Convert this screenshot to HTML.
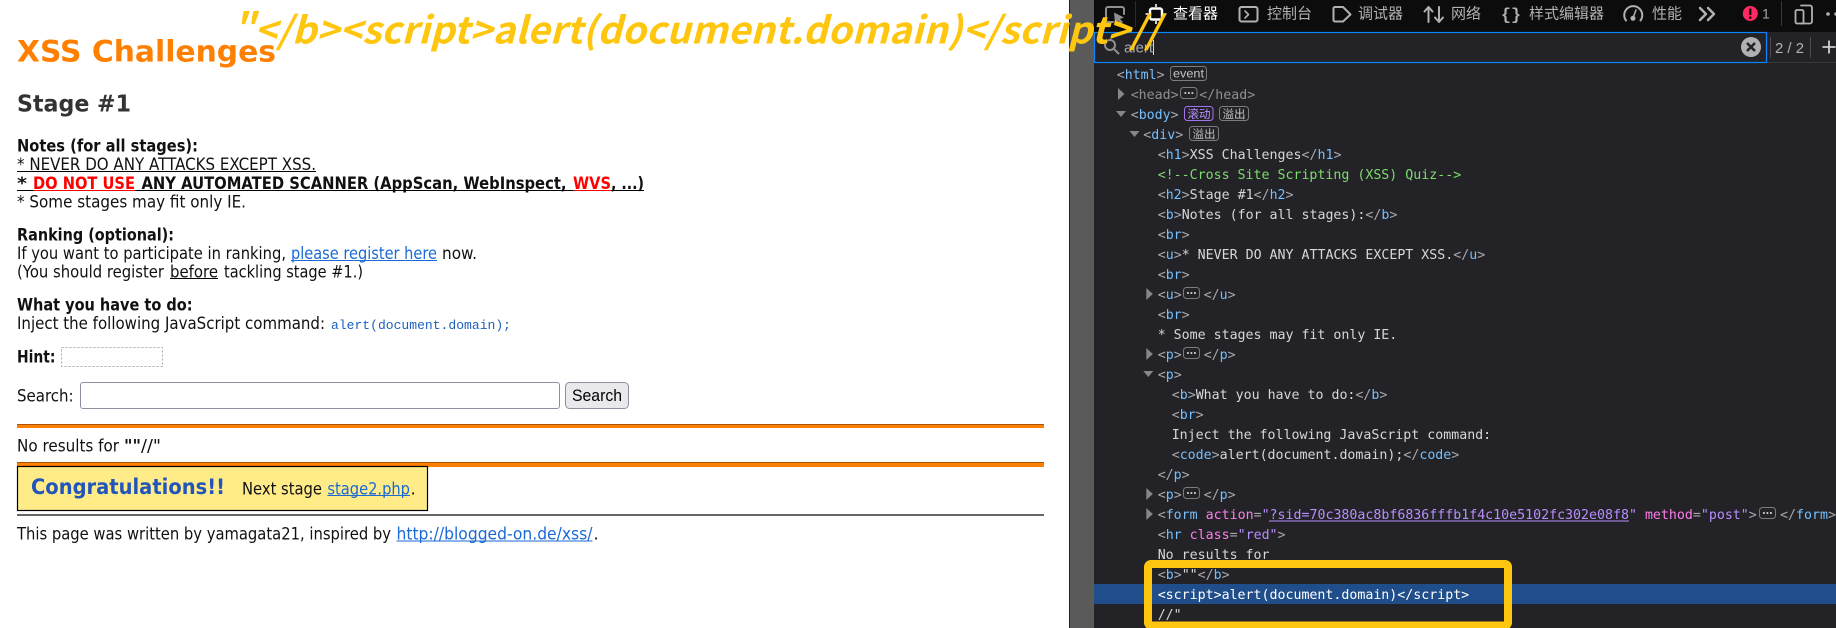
<!DOCTYPE html>
<html lang="zh"><head><meta charset="utf-8"><title>XSS Challenges</title>
<style>
html,body{margin:0;padding:0;background:#fff;width:1836px;height:628px;overflow:hidden}
svg{display:block;position:absolute;left:0;top:0}
text{white-space:pre}
.p{font-family:"DejaVu Sans","Liberation Sans",sans-serif;font-size:16.4px;fill:#111}
.h{font-weight:bold}
.m{font-family:"DejaVu Sans Mono","Liberation Mono",monospace;font-size:13.28px;fill:#d7d7db}
.c{fill:#a8a8ad}.n{fill:#75bfff}.g{fill:#8f8f93}.a{fill:#ff7de9}.v{fill:#b98eff}.k{fill:#7ddb6e}.w{fill:#fff}
.z{font-family:"Liberation Sans","Noto Sans CJK SC",sans-serif;font-size:15px;fill:#b1b1b3}
.bd{font-family:"Liberation Sans","Noto Sans CJK SC",sans-serif;font-size:12px;fill:#c4c4c6}
.box{fill:none;stroke:#7c7c80;stroke-width:1}
.ic{fill:none;stroke:#b1b1b3;stroke-width:2;stroke-linecap:round;stroke-linejoin:round}
.ar{fill:#87878a}
</style></head><body>
<svg width="1836" height="628" viewBox="0 0 1836 628" xmlns="http://www.w3.org/2000/svg">
<rect width="1069" height="628" fill="#fff"/>
<text class="p h" x="17" y="61.500" style="font-size:29px;fill:#ff7f00" textLength="259" lengthAdjust="spacingAndGlyphs">XSS Challenges</text>
<text class="p h" x="17" y="111.500" style="font-size:23px;fill:#333" textLength="114" lengthAdjust="spacingAndGlyphs">Stage #1</text>
<text class="p h" x="17" y="151.500" textLength="181" lengthAdjust="spacingAndGlyphs">Notes (for all stages):</text>
<text class="p" x="17" y="170" textLength="299" lengthAdjust="spacingAndGlyphs">* NEVER DO ANY ATTACKS EXCEPT XSS.</text>
<rect x="17" y="171" width="299" height="1" fill="#000"/>
<text class="p h" x="17" y="189" textLength="10" lengthAdjust="spacingAndGlyphs">*</text>
<text class="p h" x="33" y="189" style="fill:#f00" textLength="102" lengthAdjust="spacingAndGlyphs">DO NOT USE</text>
<text class="p h" x="141.500" y="189" textLength="425" lengthAdjust="spacingAndGlyphs">ANY AUTOMATED SCANNER (AppScan, WebInspect,</text>
<text class="p h" x="573" y="189" style="fill:#f00" textLength="38" lengthAdjust="spacingAndGlyphs">WVS</text>
<text class="p h" x="611" y="189" textLength="33" lengthAdjust="spacingAndGlyphs">, ...)</text>
<rect x="17" y="190" width="627" height="1" fill="#000"/>
<rect x="33" y="190" width="102" height="1" fill="#f00"/>
<rect x="573" y="190" width="38" height="1" fill="#f00"/>
<text class="p" x="17" y="207.500" textLength="229" lengthAdjust="spacingAndGlyphs">* Some stages may fit only IE.</text>
<text class="p h" x="17" y="240.500" textLength="157" lengthAdjust="spacingAndGlyphs">Ranking (optional):</text>
<text class="p" x="17" y="259" textLength="269" lengthAdjust="spacingAndGlyphs">If you want to participate in ranking,</text>
<text class="p" x="291" y="259" style="fill:#1a6ad6" textLength="146" lengthAdjust="spacingAndGlyphs">please register here</text>
<rect x="291" y="260" width="146" height="1" fill="#1a6ad6"/>
<text class="p" x="442" y="259" textLength="35" lengthAdjust="spacingAndGlyphs">now.</text>
<text class="p" x="17" y="277.500" textLength="147" lengthAdjust="spacingAndGlyphs">(You should register</text>
<text class="p" x="170" y="277.500" textLength="48" lengthAdjust="spacingAndGlyphs">before</text>
<rect x="170" y="278" width="48" height="1" fill="#000"/>
<text class="p" x="224" y="277.500" textLength="139" lengthAdjust="spacingAndGlyphs">tackling stage #1.)</text>
<text class="p h" x="17" y="310.500" textLength="175.500" lengthAdjust="spacingAndGlyphs">What you have to do:</text>
<text class="p" x="17" y="329" textLength="308" lengthAdjust="spacingAndGlyphs">Inject the following JavaScript command:</text>
<text x="331" y="329" style="font-family:'Liberation Mono',monospace;font-size:13px;fill:#1f5fc0" textLength="180" lengthAdjust="spacingAndGlyphs">alert(document.domain);</text>
<text class="p h" x="17" y="362.500" textLength="38.500" lengthAdjust="spacingAndGlyphs">Hint:</text>
<rect x="61.500" y="347.500" width="101" height="19" fill="none" stroke="#aaa" stroke-width="1" stroke-dasharray="2 2"/>
<text class="p" x="17" y="401.500" textLength="56.600" lengthAdjust="spacingAndGlyphs">Search:</text>
<rect x="80.500" y="382.500" width="479" height="26" rx="2.500" fill="#fff" stroke="#8f8f9d"/>
<rect x="565.500" y="382.500" width="63" height="26" rx="4" fill="#e9e9ed" stroke="#8f8f9d"/>
<text x="572" y="401" style="font-family:'Liberation Sans',sans-serif;font-size:17px;fill:#000" textLength="50" lengthAdjust="spacingAndGlyphs">Search</text>
<rect x="17" y="424" width="1027" height="4" fill="#ff7f00"/><rect x="17" y="424" width="1027" height="1" fill="#a85400"/>
<text class="p" x="17" y="451.500" textLength="102" lengthAdjust="spacingAndGlyphs">No results for</text>
<text class="p h" x="124" y="451.500" textLength="17" lengthAdjust="spacingAndGlyphs">""</text>
<text class="p" x="141" y="451.500" textLength="20" lengthAdjust="spacingAndGlyphs">//"</text>
<rect x="17" y="462" width="1027" height="5" fill="#ff7f00"/><rect x="17" y="462" width="1027" height="1" fill="#a85400"/>
<rect x="17.500" y="466.500" width="410" height="44" fill="#ffeb88" stroke="#000" stroke-width="1.200"/>
<text class="p h" x="31" y="494" style="font-size:21px;fill:#2255bb" textLength="194" lengthAdjust="spacingAndGlyphs">Congratulations!!</text>
<text class="p" x="242" y="494.500" textLength="80" lengthAdjust="spacingAndGlyphs">Next stage</text>
<text class="p" x="327.400" y="494.500" style="fill:#1a6ad6" textLength="82.600" lengthAdjust="spacingAndGlyphs">stage2.php</text>
<rect x="327.400" y="495" width="82.600" height="1" fill="#1a6ad6"/>
<text class="p" x="410.500" y="494.500">.</text>
<rect x="17" y="514" width="1027" height="2" fill="#666"/>
<text class="p" x="17" y="539.500" textLength="374" lengthAdjust="spacingAndGlyphs">This page was written by yamagata21, inspired by</text>
<text class="p" x="396.500" y="539.500" style="fill:#1a6ad6" textLength="196" lengthAdjust="spacingAndGlyphs">http://blogged-on.de/xss/</text>
<rect x="396.500" y="540.500" width="196" height="1" fill="#1a6ad6"/>
<text class="p" x="593.500" y="539.500">.</text>

<rect x="1069" width="767" height="628" fill="#232327"/>
<rect x="1069" width="1" height="628" fill="#222"/>
<rect x="1070" width="24" height="628" fill="#5a5a5a"/>
<rect x="1094" width="742" height="32" fill="#0c0c0d"/>
<rect x="1094" y="62" width="742" height="1" fill="#38383d"/>
<rect x="1094.500" y="32.500" width="672" height="30" fill="#232327" stroke="#0a84ff" stroke-width="1.200"/>

<path class="ic" style="stroke:#8f8f92" d="M1113 22H1108a2 2 0 0 1-2-2V9a2 2 0 0 1 2-2h14a2 2 0 0 1 2 2v5"/>
<path d="M1114 12.500l10 5-4 1.500 3 3-2 1.500-3-3-3 3z" fill="#8f8f92"/>
<rect x="1135" y="1" width="1" height="26" fill="#2c2c30"/>
<rect x="1150" y="8.500" width="12" height="11" rx="2" fill="#0c0c0d" stroke="#fff" stroke-width="2.400"/>
<path d="M1156 4v3M1156 21v3M1145.500 14h3M1163.500 14h3" stroke="#fff" stroke-width="1.600"/>
<text class="z" x="1173" y="18.700" style="fill:#fff">查看器</text>
<rect x="1239.500" y="7" width="18" height="14.500" rx="2" class="ic"/><path class="ic" style="stroke-width:1.600" d="M1245 11l3.500 3.500-3.500 3.500"/>
<text class="z" x="1267" y="18.700">控制台</text>
<path class="ic" d="M1335 7h8l7.500 7.500-7.500 7h-8a1.500 1.500 0 0 1-1.500-1.500v-11.500a1.500 1.500 0 0 1 1.500-1.500z"/>
<text class="z" x="1358" y="18.700">调试器</text>
<path class="ic" d="M1428.500 22V7M1424.500 11.500l4-4.500 4 4.500M1439 7v15M1435 17.500l4 4.500 4-4.500"/>
<text class="z" x="1451" y="18.700">网络</text>
<text x="1501" y="19.500" style="font-family:'Liberation Mono',monospace;font-weight:bold;font-size:17px;fill:#b1b1b3" textLength="20" lengthAdjust="spacingAndGlyphs">{}</text>
<text class="z" x="1529" y="18.700">样式编辑器</text>
<path class="ic" d="M1626 20.500a9 9 0 1 1 14.500 0"/><circle cx="1633" cy="18.300" r="2.500" fill="#b1b1b3"/><path class="ic" style="stroke-width:1.500" d="M1633 18l3-8"/>
<text class="z" x="1652" y="18.700">性能</text>
<path class="ic" style="stroke-width:2.500" d="M1700 8l6 6-6 6M1708 8l6 6-6 6"/>
<circle cx="1750.300" cy="13.500" r="7.500" fill="#ff2a62"/>
<rect x="1749.200" y="8.500" width="2.200" height="6.500" fill="#0c0c0d"/><rect x="1749.200" y="16.500" width="2.200" height="2.200" fill="#0c0c0d"/>
<text class="z" x="1762" y="18.500" style="fill:#a0a8b0;font-size:14px">1</text>
<rect x="1781" y="1" width="1" height="25" fill="#38383d"/>
<path class="ic" style="stroke-width:1.800" d="M1801 5.500h9a2 2 0 0 1 2 2v14a2 2 0 0 1-2 2h-9"/><rect x="1795.500" y="10" width="8" height="13.500" rx="1.500" class="ic" style="stroke-width:1.800"/>
<circle cx="1828" cy="14" r="1.800" fill="#b1b1b3"/><circle cx="1836" cy="14" r="1.800" fill="#b1b1b3"/>

<circle cx="1110" cy="45" r="5" fill="none" stroke="#8f8f92" stroke-width="2"/><path d="M1114 49l5 5" stroke="#8f8f92" stroke-width="2"/>
<text x="1124" y="52.500" style="font-family:'Liberation Sans',sans-serif;font-size:15px;fill:#a8a8ad" textLength="29" lengthAdjust="spacingAndGlyphs">alert</text>
<rect x="1153" y="40" width="1" height="15" fill="#d7d7db"/>
<circle cx="1751" cy="47" r="10" fill="#b1b1b3"/><path d="M1747 43l8 8M1755 43l-8 8" stroke="#232327" stroke-width="2.600"/>
<rect x="1770" y="37" width="1" height="21" fill="#4a4a4f"/>
<text x="1775" y="53" style="font-family:'Liberation Sans',sans-serif;font-size:15px;fill:#b1b1b3" textLength="29" lengthAdjust="spacingAndGlyphs">2 / 2</text>
<rect x="1810" y="37" width="1" height="21" fill="#4a4a4f"/>
<path d="M1829 40.500v13M1822.500 47h13" stroke="#d0d0d2" stroke-width="1.800"/>

<rect x="1094" y="584" width="742" height="20" fill="#204e8a"/>

<text class="m" x="1116.700" y="79"><tspan class="c">&lt;</tspan><tspan class="n">html</tspan><tspan class="c">&gt;</tspan></text>
<rect x="1170.500" y="66.500" width="36" height="14" rx="3" class="box"/><text class="bd" x="1173" y="77.500" textLength="31" lengthAdjust="spacingAndGlyphs">event</text>
<path class="ar" d="M1118 88l6.500 6-6.500 6z"/>
<text class="m g" x="1130.700" y="99">&lt;head&gt;</text>
<rect x="1180.500" y="87.500" width="16.500" height="11" rx="3" class="box"/><path d="M1184.500 93h1.800M1188 93h1.800M1191.500 93h1.800" stroke="#d7d7db" stroke-width="1.800"/>
<text class="m g" x="1199.300" y="99">&lt;/head&gt;</text>
<path class="ar" d="M1116 111h10l-5 6z"/>
<text class="m" x="1130.700" y="119"><tspan class="c">&lt;</tspan><tspan class="n">body</tspan><tspan class="c">&gt;</tspan></text>
<rect x="1184.500" y="106.500" width="28.500" height="14" rx="3" fill="none" stroke="#a573f0"/><text class="bd" x="1187.500" y="118" style="fill:#b98eff;font-size:11.500px">滚动</text>
<rect x="1219.500" y="106.500" width="29" height="14" rx="3" class="box"/><text class="bd" x="1222.500" y="118" style="font-size:11.500px">溢出</text>
<path class="ar" d="M1129.500 131h10l-5 6z"/>
<text class="m" x="1143.300" y="139"><tspan class="c">&lt;</tspan><tspan class="n">div</tspan><tspan class="c">&gt;</tspan></text>
<rect x="1189.500" y="126.500" width="29" height="14" rx="3" class="box"/><text class="bd" x="1192.500" y="138" style="font-size:11.500px">溢出</text>
<text class="m" x="1157.700" y="159"><tspan class="c">&lt;</tspan><tspan class="n">h1</tspan><tspan class="c">&gt;</tspan>XSS Challenges<tspan class="c">&lt;/</tspan><tspan class="n">h1</tspan><tspan class="c">&gt;</tspan></text>
<text class="m k" x="1157.700" y="179">&lt;!--Cross Site Scripting (XSS) Quiz--&gt;</text>
<text class="m" x="1157.700" y="199"><tspan class="c">&lt;</tspan><tspan class="n">h2</tspan><tspan class="c">&gt;</tspan>Stage #1<tspan class="c">&lt;/</tspan><tspan class="n">h2</tspan><tspan class="c">&gt;</tspan></text>
<text class="m" x="1157.700" y="219"><tspan class="c">&lt;</tspan><tspan class="n">b</tspan><tspan class="c">&gt;</tspan>Notes (for all stages):<tspan class="c">&lt;/</tspan><tspan class="n">b</tspan><tspan class="c">&gt;</tspan></text>
<text class="m" x="1157.700" y="239"><tspan class="c">&lt;</tspan><tspan class="n">br</tspan><tspan class="c">&gt;</tspan></text>
<text class="m" x="1157.700" y="259"><tspan class="c">&lt;</tspan><tspan class="n">u</tspan><tspan class="c">&gt;</tspan>* NEVER DO ANY ATTACKS EXCEPT XSS.<tspan class="c">&lt;/</tspan><tspan class="n">u</tspan><tspan class="c">&gt;</tspan></text>
<text class="m" x="1157.700" y="279"><tspan class="c">&lt;</tspan><tspan class="n">br</tspan><tspan class="c">&gt;</tspan></text>
<path class="ar" d="M1146.300 288l6.500 6-6.500 6z"/>
<text class="m" x="1157.700" y="299"><tspan class="c">&lt;</tspan><tspan class="n">u</tspan><tspan class="c">&gt;</tspan></text>
<rect x="1183.500" y="287.500" width="16" height="11" rx="3" class="box"/><path d="M1187 293h1.800M1190.500 293h1.800M1194 293h1.800" stroke="#d7d7db" stroke-width="1.800"/>
<text class="m" x="1203.700" y="299"><tspan class="c">&lt;/</tspan><tspan class="n">u</tspan><tspan class="c">&gt;</tspan></text>
<text class="m" x="1157.700" y="319"><tspan class="c">&lt;</tspan><tspan class="n">br</tspan><tspan class="c">&gt;</tspan></text>
<text class="m" x="1157.700" y="339">* Some stages may fit only IE.</text>
<path class="ar" d="M1146.300 348l6.500 6-6.500 6z"/>
<text class="m" x="1157.700" y="359"><tspan class="c">&lt;</tspan><tspan class="n">p</tspan><tspan class="c">&gt;</tspan></text>
<rect x="1183.500" y="347.500" width="16" height="11" rx="3" class="box"/><path d="M1187 353h1.800M1190.500 353h1.800M1194 353h1.800" stroke="#d7d7db" stroke-width="1.800"/>
<text class="m" x="1203.700" y="359"><tspan class="c">&lt;/</tspan><tspan class="n">p</tspan><tspan class="c">&gt;</tspan></text>
<path class="ar" d="M1143.300 371h10l-5 6z"/>
<text class="m" x="1157.700" y="379"><tspan class="c">&lt;</tspan><tspan class="n">p</tspan><tspan class="c">&gt;</tspan></text>
<text class="m" x="1171.700" y="399"><tspan class="c">&lt;</tspan><tspan class="n">b</tspan><tspan class="c">&gt;</tspan>What you have to do:<tspan class="c">&lt;/</tspan><tspan class="n">b</tspan><tspan class="c">&gt;</tspan></text>
<text class="m" x="1171.700" y="419"><tspan class="c">&lt;</tspan><tspan class="n">br</tspan><tspan class="c">&gt;</tspan></text>
<text class="m" x="1171.700" y="439">Inject the following JavaScript command:</text>
<text class="m" x="1171.700" y="459"><tspan class="c">&lt;</tspan><tspan class="n">code</tspan><tspan class="c">&gt;</tspan>alert(document.domain);<tspan class="c">&lt;/</tspan><tspan class="n">code</tspan><tspan class="c">&gt;</tspan></text>
<text class="m" x="1157.700" y="479"><tspan class="c">&lt;/</tspan><tspan class="n">p</tspan><tspan class="c">&gt;</tspan></text>
<path class="ar" d="M1146.300 488l6.500 6-6.500 6z"/>
<text class="m" x="1157.700" y="499"><tspan class="c">&lt;</tspan><tspan class="n">p</tspan><tspan class="c">&gt;</tspan></text>
<rect x="1183.500" y="487.500" width="16" height="11" rx="3" class="box"/><path d="M1187 493h1.800M1190.500 493h1.800M1194 493h1.800" stroke="#d7d7db" stroke-width="1.800"/>
<text class="m" x="1203.700" y="499"><tspan class="c">&lt;/</tspan><tspan class="n">p</tspan><tspan class="c">&gt;</tspan></text>
<path class="ar" d="M1146.300 508l6.500 6-6.500 6z"/>
<text class="m" x="1157.700" y="519"><tspan class="c">&lt;</tspan><tspan class="n">form</tspan> <tspan class="a">action</tspan><tspan class="c">=</tspan><tspan class="v">"?sid=70c380ac8bf6836fffb1f4c10e5102fc302e08f8"</tspan> <tspan class="a">method</tspan><tspan class="c">=</tspan><tspan class="v">"post"</tspan><tspan class="c">&gt;</tspan></text>
<rect x="1269" y="520.500" width="360" height="1" fill="#b98eff"/>
<rect x="1759.500" y="507.500" width="16" height="11" rx="3" class="box"/><path d="M1763 513h1.800M1766.500 513h1.800M1770 513h1.800" stroke="#d7d7db" stroke-width="1.800"/>
<text class="m" x="1780" y="519"><tspan class="c">&lt;/</tspan><tspan class="n">form</tspan><tspan class="c">&gt;</tspan></text>
<text class="m" x="1157.700" y="539"><tspan class="c">&lt;</tspan><tspan class="n">hr</tspan> <tspan class="a">class</tspan><tspan class="c">=</tspan><tspan class="v">"red"</tspan><tspan class="c">&gt;</tspan></text>
<text class="m" x="1157.700" y="559">No results for</text>
<text class="m" x="1157.700" y="579"><tspan class="c">&lt;</tspan><tspan class="n">b</tspan><tspan class="c">&gt;</tspan>""<tspan class="c">&lt;/</tspan><tspan class="n">b</tspan><tspan class="c">&gt;</tspan></text>
<text class="m w" x="1157.700" y="599">&lt;script&gt;alert(document.domain)&lt;/script&gt;</text>
<text class="m" x="1157.700" y="619">//"</text>

<rect x="1148" y="564" width="360" height="61.500" rx="3" fill="none" stroke="#ffc60f" stroke-width="8"/>
<text x="232" y="43.300" style="font-family:'Noto Sans CJK SC','Liberation Sans',sans-serif;font-weight:bold;font-style:italic;font-size:37px;fill:#ffc60f" textLength="928" lengthAdjust="spacingAndGlyphs">"&lt;/b&gt;&lt;script&gt;alert(document.domain)&lt;/script&gt;//</text>
</svg>
</body></html>
